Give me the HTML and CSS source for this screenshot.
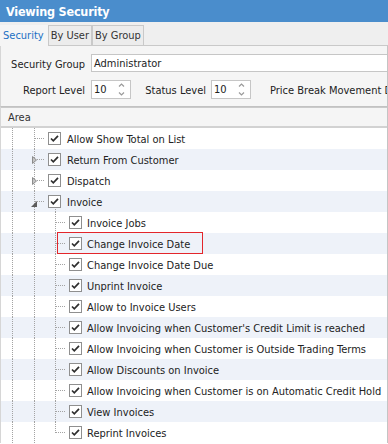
FILE: index.html
```html
<!DOCTYPE html>
<html>
<head>
    <meta charset="UTF-8" />
    <title>Viewing Security</title>
    <link rel="stylesheet" href="styles.css">
</head>
<body>
<div class="window">
    <div class="title">Viewing Security</div>

    <div class="tabs">
        <div class="tab active">Security</div>
        <div class="tab">By User</div>
        <div class="tab">By Group</div>
    </div>

    <div class="filters">
        <div class="frow">
            <div class="lbl">Security Group</div>
            <div class="field wide">Administrator</div>
        </div>
        <div class="frow second">
            <div class="lbl">Report Level</div>
            <div class="field spin">10<svg class="arrows" width="7" height="15" viewBox="0 0 7 15"><path d="M1 4.5 L3.5 2 L6 4.5 M1 10.5 L3.5 13 L6 10.5" fill="none" stroke="#9a9a9a" stroke-width="1.2"/></svg></div>
            <div class="lbl lbl-status">Status Level</div>
            <div class="field spin">10<svg class="arrows" width="7" height="15" viewBox="0 0 7 15"><path d="M1 4.5 L3.5 2 L6 4.5 M1 10.5 L3.5 13 L6 10.5" fill="none" stroke="#9a9a9a" stroke-width="1.2"/></svg></div>
            <div class="lbl lbl-price">Price Break Movement Default Level</div>
        </div>
    </div>

    <div class="grid">
        <div class="ghead">Area</div>

        <div class="row">
            <span class="ind vl"></span><span class="ind vl hc"></span>
            <span class="chk"><svg width="11" height="11" viewBox="0 0 11 11"><path d="M2 5.5 L4.3 7.8 L9 2.8"/></svg></span>
            <span class="txt">Allow Show Total on List</span>
        </div>
        <div class="row alt">
            <span class="ind vl"></span><span class="ind vl hc"><svg class="exp" width="5" height="8" viewBox="0 0 5 8"><path d="M0.5 0.5 L4.5 4 L0.5 7.5 Z"/></svg></span>
            <span class="chk"><svg width="11" height="11" viewBox="0 0 11 11"><path d="M2 5.5 L4.3 7.8 L9 2.8"/></svg></span>
            <span class="txt">Return From Customer</span>
        </div>
        <div class="row">
            <span class="ind vl"></span><span class="ind vl hc"><svg class="exp" width="5" height="8" viewBox="0 0 5 8"><path d="M0.5 0.5 L4.5 4 L0.5 7.5 Z"/></svg></span>
            <span class="chk"><svg width="11" height="11" viewBox="0 0 11 11"><path d="M2 5.5 L4.3 7.8 L9 2.8"/></svg></span>
            <span class="txt">Dispatch</span>
        </div>
        <div class="row alt open">
            <span class="ind vl"></span><span class="ind vl hc"><svg class="exp-open" width="6" height="6" viewBox="0 0 6 6"><path d="M6 0 L6 6 L0 6 Z"/></svg></span>
            <span class="chk"><svg width="11" height="11" viewBox="0 0 11 11"><path d="M2 5.5 L4.3 7.8 L9 2.8"/></svg></span>
            <span class="txt">Invoice</span>
        </div>

        <div class="row l3">
            <span class="ind vl"></span><span class="ind vl"></span><span class="ind3 vl hc"></span>
            <span class="chk"><svg width="11" height="11" viewBox="0 0 11 11"><path d="M2 5.5 L4.3 7.8 L9 2.8"/></svg></span>
            <span class="txt">Invoice Jobs</span>
        </div>
        <div class="row alt l3 marked">
            <span class="ind vl"></span><span class="ind vl"></span><span class="ind3 vl hc"></span>
            <span class="chk"><svg width="11" height="11" viewBox="0 0 11 11"><path d="M2 5.5 L4.3 7.8 L9 2.8"/></svg></span>
            <span class="txt">Change Invoice Date</span>
            <span class="redbox"></span>
        </div>
        <div class="row l3">
            <span class="ind vl"></span><span class="ind vl"></span><span class="ind3 vl hc"></span>
            <span class="chk"><svg width="11" height="11" viewBox="0 0 11 11"><path d="M2 5.5 L4.3 7.8 L9 2.8"/></svg></span>
            <span class="txt">Change Invoice Date Due</span>
        </div>
        <div class="row alt l3">
            <span class="ind vl"></span><span class="ind vl"></span><span class="ind3 vl hc"></span>
            <span class="chk"><svg width="11" height="11" viewBox="0 0 11 11"><path d="M2 5.5 L4.3 7.8 L9 2.8"/></svg></span>
            <span class="txt">Unprint Invoice</span>
        </div>
        <div class="row l3">
            <span class="ind vl"></span><span class="ind vl"></span><span class="ind3 vl hc"></span>
            <span class="chk"><svg width="11" height="11" viewBox="0 0 11 11"><path d="M2 5.5 L4.3 7.8 L9 2.8"/></svg></span>
            <span class="txt">Allow to Invoice Users</span>
        </div>
        <div class="row alt l3">
            <span class="ind vl"></span><span class="ind vl"></span><span class="ind3 vl hc"></span>
            <span class="chk"><svg width="11" height="11" viewBox="0 0 11 11"><path d="M2 5.5 L4.3 7.8 L9 2.8"/></svg></span>
            <span class="txt">Allow Invoicing when Customer's Credit Limit is reached</span>
        </div>
        <div class="row l3">
            <span class="ind vl"></span><span class="ind vl"></span><span class="ind3 vl hc"></span>
            <span class="chk"><svg width="11" height="11" viewBox="0 0 11 11"><path d="M2 5.5 L4.3 7.8 L9 2.8"/></svg></span>
            <span class="txt">Allow Invoicing when Customer is Outside Trading Terms</span>
        </div>
        <div class="row alt l3">
            <span class="ind vl"></span><span class="ind vl"></span><span class="ind3 vl hc"></span>
            <span class="chk"><svg width="11" height="11" viewBox="0 0 11 11"><path d="M2 5.5 L4.3 7.8 L9 2.8"/></svg></span>
            <span class="txt">Allow Discounts on Invoice</span>
        </div>
        <div class="row l3">
            <span class="ind vl"></span><span class="ind vl"></span><span class="ind3 vl hc"></span>
            <span class="chk"><svg width="11" height="11" viewBox="0 0 11 11"><path d="M2 5.5 L4.3 7.8 L9 2.8"/></svg></span>
            <span class="txt">Allow Invoicing when Customer is on Automatic Credit Hold</span>
        </div>
        <div class="row alt l3">
            <span class="ind vl"></span><span class="ind vl"></span><span class="ind3 vl hc"></span>
            <span class="chk"><svg width="11" height="11" viewBox="0 0 11 11"><path d="M2 5.5 L4.3 7.8 L9 2.8"/></svg></span>
            <span class="txt">View Invoices</span>
        </div>
        <div class="row l3">
            <span class="ind vl"></span><span class="ind vl"></span><span class="ind3 last hc"></span>
            <span class="chk"><svg width="11" height="11" viewBox="0 0 11 11"><path d="M2 5.5 L4.3 7.8 L9 2.8"/></svg></span>
            <span class="txt">Reprint Invoices</span>
        </div>
    </div>
</div>
</body>
</html>
```

FILE: styles.css
```css
body {
    margin: 0;
    font-family: "DejaVu Sans Condensed", "DejaVu Sans", sans-serif;
    font-stretch: condensed;
    font-size: 11px;
    color: #222;
}

.window {
    width: 388px;
    height: 444px;
    overflow: hidden;
    background: #fff;
}

.title {
    height: 22px;
    line-height: 23px;
    padding-left: 6px;
    background-color: #4a8dcc;
    color: white;
    font-weight: bold;
    font-size: 12.5px;
    letter-spacing: -0.2px;
}

/* tab strip */
.tabs {
    height: 23px;
    background-color: #efefef;
    display: flex;
    align-items: flex-end;
}

.tab {
    height: 19px;
    line-height: 20px;
    padding: 0 2px;
    background-color: #ececec;
    border: 1px solid #c9c9c9;
    border-bottom: none;
    color: #333;
}

.tab.active {
    height: 21px;
    line-height: 22px;
    padding: 0 4px 0 3px;
    border: none;
    background-color: #f5f5f5;
    color: #1b70c4;
    position: relative;
    z-index: 1;
    margin-bottom: -1px;
}

/* filter panel */
.filters {
    background-color: #f5f5f5;
    border-top: 1px solid #c9c9c9;
    border-left: 1px solid #d6d6d6;
    border-right: 1px solid #c4c4c4;
    border-bottom: 1px solid #c2c2c2;
    padding: 8px 0 7px 0;
    overflow: hidden;
}

.frow {
    display: flex;
    align-items: center;
    white-space: nowrap;
}

.frow.second {
    margin-top: 8px;
}

.lbl {
    width: 84px;
    flex: none;
    text-align: right;
    margin-right: 6px;
    padding-top: 2px;
}

.lbl-status {
    width: 61px;
    margin-left: 14px;
    margin-right: 5px;
}

.lbl-price {
    width: auto;
    text-align: left;
    margin-left: 19px;
}

.field {
    box-sizing: border-box;
    background: white;
    border: 1px solid #c6c6c6;
    padding-left: 2px;
    flex: none;
}

.wide {
    width: 320px;
    height: 18px;
    line-height: 17px;
}

.spin {
    width: 40px;
    height: 19px;
    line-height: 18px;
    display: flex;
    justify-content: space-between;
    align-items: center;
}

.arrows {
    margin-right: 5px;
}

/* tree grid */
.grid {
    border-left: 1px solid #d6d6d6;
    border-right: 1px solid #c4c4c4;
}

.ghead {
    height: 18px;
    line-height: 19px;
    padding-left: 7px;
    background-color: #f5f5f5;
    border-top: 1px solid #cacaca;
    border-bottom: 2px solid #d2d2d2;
    color: #333;
}

.row {
    height: 21px;
    display: flex;
    align-items: center;
    white-space: nowrap;
    background-color: #fff;
}

.row.alt {
    background-color: #eef2f9;
}

.row.open {
    background: repeating-linear-gradient(to bottom, #a3a3a3 0 1px, transparent 1px 2px) 54px 18px / 1px 3px no-repeat, #eef2f9;
}

.ind, .ind3 {
    flex: none;
    width: 22px;
    height: 21px;
    display: flex;
    align-items: center;
}

.ind3 {
    width: 21px;
}

.ind.vl {
    background: repeating-linear-gradient(to bottom, #a3a3a3 0 1px, transparent 1px 2px) 11px 0 / 1px 100% no-repeat;
}

.ind.vl.hc {
    background:
        repeating-linear-gradient(to right, #a3a3a3 0 1px, transparent 1px 2px) 12px 10px / 10px 1px no-repeat,
        repeating-linear-gradient(to bottom, #a3a3a3 0 1px, transparent 1px 2px) 11px 0 / 1px 100% no-repeat;
}

.ind3.vl.hc {
    background:
        repeating-linear-gradient(to right, #a3a3a3 0 1px, transparent 1px 2px) 11px 10px / 10px 1px no-repeat,
        repeating-linear-gradient(to bottom, #a3a3a3 0 1px, transparent 1px 2px) 10px 0 / 1px 100% no-repeat;
}

.ind3.last.hc {
    background:
        repeating-linear-gradient(to right, #a3a3a3 0 1px, transparent 1px 2px) 11px 10px / 10px 1px no-repeat,
        repeating-linear-gradient(to bottom, #a3a3a3 0 1px, transparent 1px 2px) 10px 0 / 1px 11px no-repeat;
}

.exp {
    margin-left: 9px;
    fill: #c4c4c4;
    stroke: #8c8c8c;
    stroke-width: 1;
}

.exp-open {
    margin-left: 8px;
    margin-top: 4px;
    fill: #5c5c5c;
}

.chk {
    flex: none;
    box-sizing: border-box;
    width: 13px;
    height: 13px;
    margin-left: 3px;
    border: 1px solid #8f8f8f;
    background: white;
    display: flex;
}

.chk svg path {
    fill: none;
    stroke: #2e2e2e;
    stroke-width: 1.7;
}

.txt {
    margin-left: 6px;
    padding-top: 2px;
}

.l3 .txt {
    margin-left: 5px;
}

.marked {
    position: relative;
}

.redbox {
    position: absolute;
    left: 56px;
    top: -1px;
    width: 146px;
    height: 22px;
    box-sizing: border-box;
    border: 1px solid #e3262b;
}
```
